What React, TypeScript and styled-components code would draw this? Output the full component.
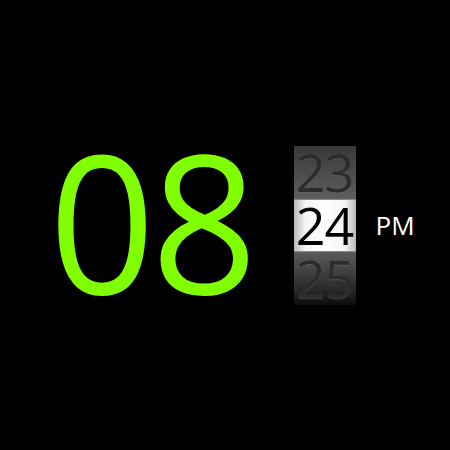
import React from "react";
import styled, { createGlobalStyle } from "styled-components";

const Global = createGlobalStyle`
  html, body { margin: 0; padding: 0; background: #000; }
  body { font-family: "Open Sans", "DejaVu Sans", sans-serif; }
`;

const Screen = styled.div`
  width: 450px;
  height: 450px;
  background: #000;
  display: flex;
  align-items: center;
  padding-left: 49px;
  box-sizing: border-box;
`;

const Row = styled.div`
  display: flex;
  align-items: center;
`;

const Hours = styled.div`
  font-size: 192px;
  line-height: 1;
  color: #7fff00;
  letter-spacing: -4px;
  margin-bottom: 10px;
  transform: scaleX(0.967);
  transform-origin: left center;
`;

const Drum = styled.div`
  width: 62px;
  display: flex;
  flex-direction: column;
  margin-left: 33px;
`;

const Cell = styled.div<{ $kind: "top" | "mid" | "bottom" }>`
  height: 53px;
  display: flex;
  align-items: center;
  justify-content: center;
  font-size: 52px;
  line-height: 1;
  letter-spacing: -1px;
  color: ${(p) => (p.$kind === "mid" ? "#000" : "#2c2c2c")};
  text-shadow: ${(p) =>
    p.$kind === "mid" ? "none" : "0 1px 0 rgba(120,120,120,0.35)"};
  background: ${(p) =>
    p.$kind === "top"
      ? "linear-gradient(to bottom, #383838, #5e5e5e)"
      : p.$kind === "mid"
      ? "linear-gradient(to right, #b8b8b8 0%, #f4f4f4 18%, #ffffff 50%, #f4f4f4 82%, #b8b8b8 100%)"
      : "linear-gradient(to bottom, #5a5a5a, #2a2a2a 70%, #0c0c0c)"};
  box-shadow: ${(p) =>
    p.$kind === "mid" ? "inset 0 1px 0 #8a8a8a, inset 0 -1px 0 #8a8a8a" : "none"};
`;

const Meridiem = styled.div`
  font-size: 26px;
  line-height: 1;
  color: #fff;
  margin-left: 20px;
`;

export default function App() {
  return (
    <>
      <Global />
      <Screen>
        <Row>
          <Hours>08</Hours>
          <Drum>
            <Cell $kind="top">23</Cell>
            <Cell $kind="mid">24</Cell>
            <Cell $kind="bottom">25</Cell>
          </Drum>
          <Meridiem>PM</Meridiem>
        </Row>
      </Screen>
    </>
  );
}
